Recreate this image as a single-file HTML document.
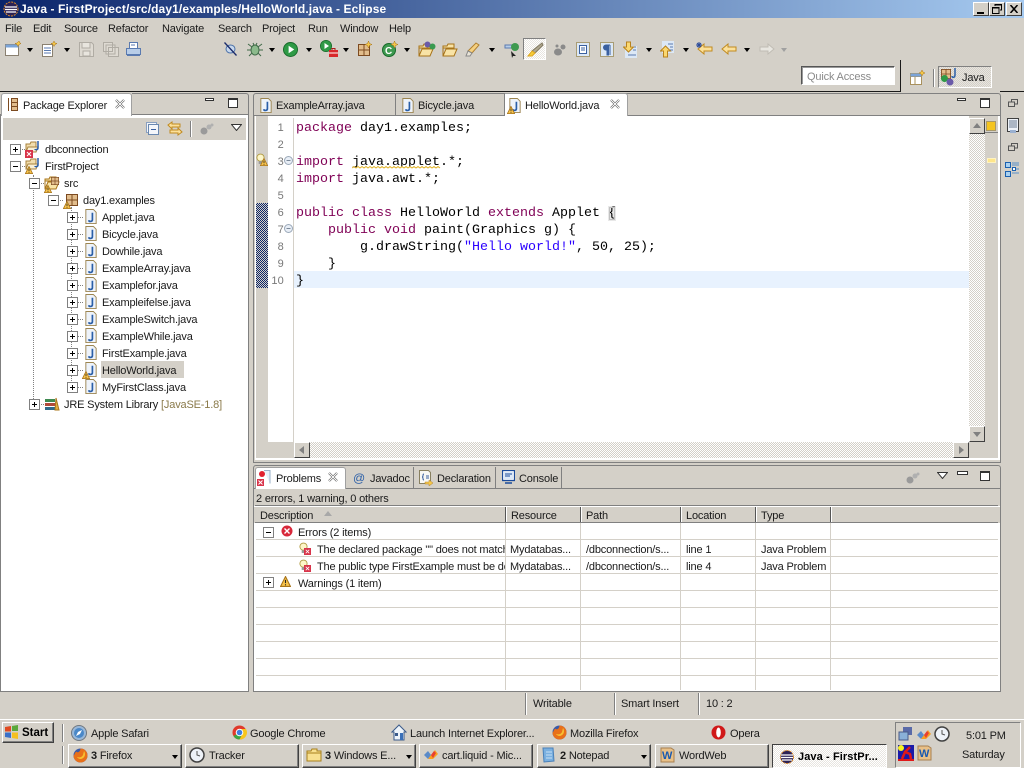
<!DOCTYPE html>
<html><head><meta charset="utf-8"><title>Java - Eclipse</title>
<style>
html,body{margin:0;padding:0;width:1024px;height:768px;overflow:hidden;background:#d4d0c8}
body{position:relative;font:11px/13px "Liberation Sans",sans-serif;color:#000}
.a,.t,svg.i{position:absolute}
.t{white-space:pre;letter-spacing:-.17px;color:#1a1a1a;margin-top:1px}
.c{position:absolute;white-space:pre;font:13.33px/17px "Liberation Mono",monospace;left:296px;color:#000;margin-top:1px}
.k{color:#7f0055;font-weight:normal}
.s{color:#2a00ff}
.n{position:absolute;left:268px;width:16px;text-align:right;font:11px/17px "Liberation Sans",sans-serif;color:#787878;letter-spacing:.2px;margin-top:1px}
.b{position:absolute;box-sizing:border-box;background:#d4d0c8;border:1px solid;border-color:#fff #404040 #404040 #fff}
.dv{position:absolute;width:1px;background:#d4d0c8}
.dh{position:absolute;height:1px;background:#d4d0c8}
.tb{position:absolute;box-sizing:border-box;height:24px;top:744px;background:#d4d0c8;border:1px solid;border-color:#fff #404040 #404040 #fff;box-shadow:inset -1px -1px 0 #808080}
.ar{position:absolute;width:0;height:0;border:3.5px solid transparent;border-top:4px solid #000;border-bottom:0}
.dot{position:absolute;border-left:1px dotted #808080}
.doh{position:absolute;border-top:1px dotted #808080}
.box{position:absolute;width:9px;height:9px;box-sizing:content-box;border:1px solid #808080;background:#fff}
.box:before{content:"";position:absolute;left:2px;top:4px;width:5px;height:1px;background:#000}
.box.p:after{content:"";position:absolute;left:4px;top:2px;width:1px;height:5px;background:#000}
</style></head><body>
<svg width="0" height="0" style="position:absolute"><defs>
<symbol id="j" viewBox="0 0 12 16"><path d="M.5.5h8l3 3v12H.5z" fill="#eef3fa" stroke="#9c8550"/><path d="M7.500 4v7.500c0 2-3.500 2.500-4 .5" fill="none" stroke="#2b5fa8" stroke-width="1.800"/></symbol>
<symbol id="w" viewBox="0 0 10 10"><path d="M5 .5l4.500 9H.5z" fill="#f7c24a" stroke="#a8741a"/><path d="M5 3.500v3M5 7.500v1" stroke="#222"/></symbol>
<symbol id="x" viewBox="0 0 8 8"><rect width="8" height="8" fill="#d8344a"/><path d="M2 2l4 4M6 2l-4 4" stroke="#fff"/></symbol>
<symbol id="prj" viewBox="0 0 16 16"><path d="M1 4h4l1-2h5v10H1z" fill="#f2deae" stroke="#a8823c"/><path d="M3 7h10l-2 5H1z" fill="#f9efd4" stroke="#a8823c"/><path d="M13 1v7c0 2-3 2-3 1" fill="none" stroke="#2b5fa8" stroke-width="1.500"/></symbol>
<symbol id="pkg" viewBox="0 0 12 12"><rect x=".5" y=".5" width="11" height="11" fill="#e2bd8c" stroke="#7c4a20"/><path d="M6 0v12M0 6h12" stroke="#7c4a20"/></symbol>
<symbol id="fold" viewBox="0 0 16 14"><path d="M1 3h4l1-2h6v4H1zM1 4v9h11l3-7H4l-3 7" fill="#f8e3a6" stroke="#a8741a"/></symbol>
<symbol id="bulb" viewBox="0 0 10 13"><circle cx="5" cy="5" r="4" fill="#fdf6c8" stroke="#b09a40"/><rect x="3" y="9" width="4" height="3" fill="#999"/></symbol>
<symbol id="play" viewBox="0 0 16 16"><circle cx="8" cy="8" r="7.500" fill="#2f9a46" stroke="#176a2a"/><path d="M6 4l6 4-6 4z" fill="#fff"/></symbol>
<symbol id="arrL" viewBox="0 0 16 12"><path d="M1 6l6-5v3h8v4H7v3z" fill="#fbe09a" stroke="#c08a20"/></symbol>
<symbol id="view" viewBox="0 0 10 8"><rect x="3.500" y=".5" width="6" height="4.500" fill="#d4d0c8" stroke="#555"/><rect x=".5" y="3" width="6" height="4.500" fill="#d4d0c8" stroke="#555"/></symbol>
</defs></svg>

<!-- title bar -->
<div class="a" style="left:0;top:0;width:1024px;height:18px;background:linear-gradient(90deg,#0a246a,#a6caf0)"></div>
<svg class="i" style="left:3px;top:1px" width="16" height="16" viewBox="0 0 16 16"><circle cx="8" cy="8" r="7" fill="#2c2255" stroke="#d98a2c" stroke-dasharray="2 1"/><path d="M2 6h12M2 8.500h12M3 11h10" stroke="#fff" stroke-width="1.300"/></svg>
<div class="t" style="left:20px;top:2px;color:#fff;font-weight:bold;font-size:12px;letter-spacing:.1px">Java - FirstProject/src/day1/examples/HelloWorld.java - Eclipse</div>
<div class="b" style="left:973px;top:2px;width:16px;height:14px"><div class="a" style="left:3px;top:9px;width:7px;height:2px;background:#000"></div></div>
<div class="b" style="left:989px;top:2px;width:16px;height:14px"><svg class="i" style="left:2px;top:1px" width="10" height="10" viewBox="0 0 10 10"><path d="M3 2V.5h6.500V6H8M.5 3.500h6.500V9.500H.5z" fill="none" stroke="#000"/><path d="M3 1h6.500M.5 4h6.500" stroke="#000"/></svg></div>
<div class="b" style="left:1006px;top:2px;width:16px;height:14px"><svg class="i" style="left:3px;top:2px" width="9" height="8" viewBox="0 0 9 8"><path d="M.5 0l7 8M7.500 0l-7 8" stroke="#000" stroke-width="1.500"/></svg></div>

<!-- menu -->
<div class="t" style="left:5px;top:22px">File</div>
<div class="t" style="left:33px;top:22px">Edit</div>
<div class="t" style="left:64px;top:22px">Source</div>
<div class="t" style="left:108px;top:22px">Refactor</div>
<div class="t" style="left:162px;top:22px">Navigate</div>
<div class="t" style="left:218px;top:22px">Search</div>
<div class="t" style="left:262px;top:22px">Project</div>
<div class="t" style="left:308px;top:22px">Run</div>
<div class="t" style="left:340px;top:22px">Window</div>
<div class="t" style="left:389px;top:22px">Help</div>

<!-- toolbar -->
<svg class="i" style="left:5px;top:41px" width="16" height="16" viewBox="0 0 16 16"><rect x=".5" y="3.500" width="13" height="11" fill="#fff" stroke="#8a8070"/><rect x=".5" y="3.500" width="13" height="3" fill="#7ba4d8"/><path d="M14 0l1 2 1 .5-2 1-1 2-1-2-2-1 2-.5z" fill="#f5c84a" stroke="#a8741a" stroke-width=".5"/></svg>
<div class="ar" style="left:27px;top:48px"></div>
<svg class="i" style="left:42px;top:41px" width="15" height="16" viewBox="0 0 15 16"><path d="M.5 3.500h10v12H.5z" fill="#fff" stroke="#8a8070"/><path d="M2 7h7M2 9.500h7M2 12h7" stroke="#5a7ab0"/><path d="M12 0l1 2 2 .5-2 1-1 2-1-2-2-1 2-.5z" fill="#f5c84a" stroke="#a8741a" stroke-width=".5"/></svg>
<div class="ar" style="left:64px;top:48px"></div>
<svg class="i" style="left:79px;top:42px" width="15" height="15" viewBox="0 0 15 15"><path d="M.5.5h12l2 2v12H.5z" fill="#dedad2" stroke="#b0aca4"/><path d="M3 1v5h8V1M4 9h7v5H4z" fill="#e8e5de" stroke="#b0aca4"/></svg>
<svg class="i" style="left:103px;top:42px" width="16" height="15" viewBox="0 0 16 15"><path d="M.5.5h9v9h-9zM3 3h9v9H3zM5.500 5.500h10v9h-10z" fill="#dedad2" stroke="#b0aca4"/></svg>
<svg class="i" style="left:126px;top:42px" width="15" height="15" viewBox="0 0 15 15"><path d="M3.500.5h8v6h-8z" fill="#fff" stroke="#5a7ab0"/><path d="M.5 6.500h14v6H.5z" fill="#b8cde8" stroke="#5a7ab0"/><path d="M1 13.500h13" stroke="#5a7ab0"/><path d="M5 3h4" stroke="#5a7ab0"/></svg>
<svg class="i" style="left:224px;top:42px" width="13" height="14" viewBox="0 0 13 14"><ellipse cx="6.500" cy="7" rx="4.500" ry="4" fill="#c8d8ec" stroke="#4a70a8"/><path d="M.5.5l12 13" stroke="#1a2a6a" stroke-width="1.300"/></svg>
<svg class="i" style="left:247px;top:41px" width="16" height="16" viewBox="0 0 16 16"><ellipse cx="8" cy="9" rx="4" ry="5" fill="#8cba8c" stroke="#406a48"/><path d="M1 3l4 3M15 3l-4 3M0 9h4M16 9h-4M2 15l3-3M14 15l-3-3M6 2l1 2M10 2L9 4" stroke="#406a48"/></svg>
<div class="ar" style="left:269px;top:48px"></div>
<svg class="i" style="left:283px;top:42px" width="15" height="15"><use href="#play"/></svg>
<div class="ar" style="left:306px;top:48px"></div>
<svg class="i" style="left:320px;top:40px" width="12" height="12"><use href="#play"/></svg>
<svg class="i" style="left:329px;top:48px" width="9" height="9" viewBox="0 0 9 9"><path d="M3 2V.5h3V2" fill="none" stroke="#b01a1a"/><rect y="2" width="9" height="7" fill="#d8282a"/><path d="M0 5h9" stroke="#fff"/></svg>
<div class="ar" style="left:343px;top:48px"></div>
<svg class="i" style="left:358px;top:44px" width="12" height="12"><use href="#pkg"/></svg>
<svg class="i" style="left:365px;top:41px" width="7" height="7" viewBox="0 0 7 7"><path d="M3.500 0l1 2.500L7 3.500l-2.500 1-1 2.500-1-2.500L0 3.500l2.500-1z" fill="#f5c84a" stroke="#a8741a" stroke-width=".5"/></svg>
<svg class="i" style="left:382px;top:43px" width="14" height="14" viewBox="0 0 14 14"><circle cx="7" cy="7" r="6.500" fill="#3f9a50" stroke="#176a2a"/><text x="3" y="11" font-family="Liberation Sans" font-size="10" font-weight="bold" fill="#fff">C</text></svg>
<svg class="i" style="left:391px;top:41px" width="7" height="7" viewBox="0 0 7 7"><path d="M3.500 0l1 2.500L7 3.500l-2.500 1-1 2.500-1-2.500L0 3.500l2.500-1z" fill="#f5c84a" stroke="#a8741a" stroke-width=".5"/></svg>
<div class="ar" style="left:404px;top:48px"></div>
<svg class="i" style="left:418px;top:43px" width="16" height="14"><use href="#fold"/></svg>
<svg class="i" style="left:424px;top:41px" width="12" height="9" viewBox="0 0 12 9"><circle cx="3.500" cy="3.500" r="3" fill="#6a5aa8"/><circle cx="8.500" cy="5.500" r="3" fill="#3a9a50"/></svg>
<svg class="i" style="left:442px;top:43px" width="16" height="14"><use href="#fold"/></svg>
<svg class="i" style="left:465px;top:42px" width="16" height="15" viewBox="0 0 16 15"><path d="M11 1l3 2-7 8-4-2z" fill="#f5d080" stroke="#b08030"/><path d="M3 9l4 2-2 3H1z" fill="#e8e4d8" stroke="#888"/></svg>
<div class="ar" style="left:489px;top:48px"></div>
<svg class="i" style="left:504px;top:42px" width="16" height="16" viewBox="0 0 16 16"><path d="M1 3h7v3H1z" fill="#b8cde8" stroke="#5a7ab0"/><path d="M7 9l5 5-3 0-1 2z" fill="#222"/><circle cx="11" cy="5" r="4" fill="#3f9a50"/></svg>
<div class="a" style="left:523px;top:38px;width:23px;height:22px;box-sizing:border-box;border:1px solid;border-color:#808080 #fff #fff #808080;background:repeating-conic-gradient(#e8e5e0 0 25%,#fff 0 50%) 0 0/2px 2px"></div>
<svg class="i" style="left:527px;top:42px" width="17" height="16" viewBox="0 0 17 16"><path d="M15 1l1 2-8 8-3-2z" fill="#b0a890" stroke="#807860"/><path d="M5 9l3 2-3 3H1z" fill="#f5cc3a" stroke="#e0a820"/></svg>
<svg class="i" style="left:553px;top:44px" width="13" height="12" viewBox="0 0 13 12"><ellipse cx="5" cy="8" rx="4" ry="3.500" fill="#8a8a8a"/><circle cx="10" cy="3" r="2.500" fill="#8a8a8a"/><circle cx="4" cy="2" r="1.500" fill="#8a8a8a"/></svg>
<svg class="i" style="left:576px;top:42px" width="14" height="15" viewBox="0 0 14 15"><rect x=".5" y=".5" width="13" height="14" fill="#dce8f6" stroke="#a89c74"/><rect x="3.500" y="3.500" width="7" height="8" fill="#fff" stroke="#3a60a0"/><path d="M5 6h4M5 8h4" stroke="#3a60a0"/></svg>
<svg class="i" style="left:600px;top:42px" width="14" height="15" viewBox="0 0 14 15"><rect x=".5" y=".5" width="13" height="14" fill="#dce8f6" stroke="#a89c74"/><path d="M10 3H6a2.500 2.500 0 000 5h1V13h1.500V3M10 3v10" fill="#3a60a0" stroke="#3a60a0"/></svg>
<svg class="i" style="left:623px;top:41px" width="15" height="17" viewBox="0 0 15 17"><path d="M2 5h12v12H2z" fill="#dce8f6"/><path d="M10 6h3M10 9h3M5 14h8" stroke="#5a7ab0"/><path d="M3.500 1h4v5h3l-5 5-5-5h3z" fill="#fbd870" stroke="#b8821c"/></svg>
<div class="ar" style="left:646px;top:48px"></div>
<svg class="i" style="left:660px;top:41px" width="15" height="17" viewBox="0 0 15 17"><path d="M2 0h12v12H2z" fill="#dce8f6"/><path d="M8 3h5M10 6h3M10 9h3" stroke="#5a7ab0"/><path d="M5.500 5l5 5h-3v6h-4v-6h-3z" fill="#fbd870" stroke="#b8821c"/></svg>
<div class="ar" style="left:683px;top:48px"></div>
<svg class="i" style="left:697px;top:43px" width="16" height="12"><use href="#arrL"/></svg>
<svg class="i" style="left:696px;top:42px" width="6" height="6" viewBox="0 0 6 6"><path d="M3 0v6M0 3h6M1 1l4 4M5 1L1 5" stroke="#2a4a9a"/></svg>
<svg class="i" style="left:721px;top:43px" width="16" height="12"><use href="#arrL"/></svg>
<div class="ar" style="left:744px;top:48px"></div>
<svg class="i" style="left:759px;top:43px" width="16" height="12" viewBox="0 0 16 12"><path d="M15 6L9 1v3H1v4h8v3z" fill="#e8e6e0" stroke="#c0bcb4"/></svg>
<div class="ar" style="left:781px;top:48px;border-top-color:#a0a0a0"></div>

<!-- quick access -->
<div class="a" style="left:801px;top:66px;width:94px;height:19px;box-sizing:border-box;background:#fff;border:1px solid;border-color:#555 #fff #fff #555;box-shadow:inset 1px 1px 0 #999"></div>
<div class="t" style="left:807px;top:70px;color:#8a8a8a">Quick Access</div>
<div class="a" style="left:0;top:91px;width:900px;height:1px;background:#1a1a1a"></div>
<div class="a" style="left:900px;top:60px;width:1px;height:32px;background:#1a1a1a"></div>
<div class="a" style="left:1000px;top:91px;width:24px;height:1px;background:#1a1a1a"></div>
<svg class="i" style="left:910px;top:70px" width="15" height="15" viewBox="0 0 15 15"><path d="M.5 3.500h11v11H.5z" fill="#fff" stroke="#a8905c"/><path d="M.5 6.500h11M5 6.500v8" stroke="#a8905c"/><path d="M.5 3.500h11v3H.5z" fill="#7ba4d8"/><path d="M12 0l1 2 2 1-2 1-1 2-1-2-2-1 2-1z" fill="#f5c84a" stroke="#a8741a" stroke-width=".5"/></svg>
<div class="a" style="left:933px;top:69px;width:1px;height:18px;background:#808080;box-shadow:1px 0 0 #fff"></div>
<div class="a" style="left:938px;top:66px;width:54px;height:22px;box-sizing:border-box;border:1px solid;border-color:#808080 #fff #fff #808080;background:repeating-conic-gradient(#e8e5e0 0 25%,#d4d0c8 0 50%) 0 0/2px 2px"></div>
<svg class="i" style="left:941px;top:69px" width="10" height="10"><use href="#pkg"/></svg>
<svg class="i" style="left:941px;top:74px" width="14" height="12" viewBox="0 0 14 12"><circle cx="3.500" cy="4.500" r="3.500" fill="#2f9a46"/><circle cx="9" cy="8" r="3.500" fill="#6a5aa8"/></svg>
<svg class="i" style="left:951px;top:68px" width="6" height="11" viewBox="0 0 6 11"><path d="M4 0v7c0 3-3 3-3 1" fill="none" stroke="#2b5fa8" stroke-width="1.500"/></svg>
<div class="t" style="left:962px;top:71px">Java</div>

<!-- package explorer panel -->
<div class="a" style="left:0;top:114px;width:249px;height:578px;box-sizing:border-box;border:1px solid #808080;background:#fff"></div>
<div class="a" style="left:1px;top:93px;width:131px;height:23px;box-sizing:border-box;background:#fff;border:1px solid #a0a0a0;border-bottom:0;border-radius:3px 3px 0 0"></div>
<div class="a" style="left:132px;top:93px;width:117px;height:21px;box-sizing:border-box;border-top:1px solid #808080;border-right:1px solid #808080;border-radius:0 3px 0 0"></div>
<svg class="i" style="left:8px;top:98px" width="10" height="13" viewBox="0 0 10 13"><path d="M.5 0v13" stroke="#7c4a20"/><rect x="3.500" y=".5" width="6" height="4" fill="#e2bd8c" stroke="#7c4a20"/><rect x="3.500" y="4.500" width="6" height="4" fill="#e2bd8c" stroke="#7c4a20"/><rect x="3.500" y="8.500" width="6" height="4" fill="#e2bd8c" stroke="#7c4a20"/></svg>
<div class="t" style="left:23px;top:99px">Package Explorer</div>
<svg class="i" style="left:115px;top:99px" width="10" height="10" viewBox="0 0 10 10"><path d="M1 1l8 8M9 1L1 9" stroke="#555" stroke-width="2.200"/><path d="M1 1l8 8M9 1L1 9" stroke="#fff" stroke-width="1"/></svg>
<div class="a" style="left:205px;top:98px;width:9px;height:3px;box-sizing:border-box;border:1px solid #333;background:#fff"></div>
<div class="a" style="left:228px;top:98px;width:10px;height:10px;box-sizing:border-box;border:1px solid #333;border-top-width:2px;background:#fff"></div>
<div class="a" style="left:3px;top:118px;width:243px;height:22px;background:#d4d0c8"></div>
<svg class="i" style="left:146px;top:122px" width="13" height="13" viewBox="0 0 13 13"><rect x=".5" y=".5" width="10" height="10" fill="#f4f6fa" stroke="#8aa0c0"/><rect x="2.500" y="2.500" width="10" height="10" fill="#f4f6fa" stroke="#6a88b0"/><path d="M5 7.500h5" stroke="#3a60a0"/></svg>
<svg class="i" style="left:167px;top:121px" width="16" height="15" viewBox="0 0 16 15"><path d="M1 4l4-3v2h8v3H5v2z" fill="#fbe09a" stroke="#c08a20"/><path d="M15 11l-4 3v-2H3V9h8V7z" fill="#fbe09a" stroke="#c08a20"/></svg>
<div class="a" style="left:190px;top:121px;width:1px;height:16px;background:#808080;box-shadow:1px 0 0 #fff"></div>
<svg class="i" style="left:199px;top:123px" width="16" height="12" viewBox="0 0 16 12"><circle cx="5" cy="8" r="3.500" fill="#9a9a9a"/><circle cx="10" cy="4" r="2.500" fill="#b0b0b0"/><circle cx="13" cy="2" r="1.500" fill="#b0b0b0"/></svg>
<svg class="i" style="left:231px;top:124px" width="11" height="7" viewBox="0 0 11 7"><path d="M.5.5h10L5.500 6.500z" fill="#fff" stroke="#333"/></svg>

<!-- tree lines -->
<div class="dot" style="left:33px;top:175px;height:228px"></div>
<div class="dot" style="left:71px;top:207px;height:180px"></div>
<div class="doh" style="left:20px;top:149px;width:5px"></div>
<div class="doh" style="left:20px;top:166px;width:5px"></div>
<div class="doh" style="left:39px;top:183px;width:5px"></div>
<div class="doh" style="left:58px;top:200px;width:5px"></div>
<div class="doh" style="left:39px;top:404px;width:5px"></div>
<div class="doh" style="left:77px;top:217px;width:6px"></div>
<div class="doh" style="left:77px;top:234px;width:6px"></div>
<div class="doh" style="left:77px;top:251px;width:6px"></div>
<div class="doh" style="left:77px;top:268px;width:6px"></div>
<div class="doh" style="left:77px;top:285px;width:6px"></div>
<div class="doh" style="left:77px;top:302px;width:6px"></div>
<div class="doh" style="left:77px;top:319px;width:6px"></div>
<div class="doh" style="left:77px;top:336px;width:6px"></div>
<div class="doh" style="left:77px;top:353px;width:6px"></div>
<div class="doh" style="left:77px;top:370px;width:6px"></div>
<div class="doh" style="left:77px;top:387px;width:6px"></div>

<div class="box p" style="left:10px;top:144px"></div>
<div class="box" style="left:10px;top:161px"></div>
<div class="box" style="left:29px;top:178px"></div>
<div class="box" style="left:48px;top:195px"></div>
<div class="box p" style="left:67px;top:212px"></div>
<div class="box p" style="left:67px;top:229px"></div>
<div class="box p" style="left:67px;top:246px"></div>
<div class="box p" style="left:67px;top:263px"></div>
<div class="box p" style="left:67px;top:280px"></div>
<div class="box p" style="left:67px;top:297px"></div>
<div class="box p" style="left:67px;top:314px"></div>
<div class="box p" style="left:67px;top:331px"></div>
<div class="box p" style="left:67px;top:348px"></div>
<div class="box p" style="left:67px;top:365px"></div>
<div class="box p" style="left:67px;top:382px"></div>
<div class="box p" style="left:29px;top:399px"></div>

<svg class="i" style="left:25px;top:140px" width="16" height="16"><use href="#prj"/></svg>
<svg class="i" style="left:25px;top:150px" width="8" height="8"><use href="#x"/></svg>
<svg class="i" style="left:25px;top:157px" width="16" height="16"><use href="#prj"/></svg>
<svg class="i" style="left:25px;top:166px" width="8" height="8"><use href="#w"/></svg>
<svg class="i" style="left:44px;top:176px" width="16" height="14"><use href="#fold"/></svg>
<svg class="i" style="left:51px;top:177px" width="8" height="8"><use href="#pkg"/></svg>
<svg class="i" style="left:44px;top:185px" width="8" height="8"><use href="#w"/></svg>
<svg class="i" style="left:66px;top:194px" width="12" height="12"><use href="#pkg"/></svg>
<svg class="i" style="left:63px;top:201px" width="8" height="8"><use href="#w"/></svg>
<svg class="i" style="left:85px;top:209px" width="12" height="15"><use href="#j"/></svg>
<svg class="i" style="left:85px;top:226px" width="12" height="15"><use href="#j"/></svg>
<svg class="i" style="left:85px;top:243px" width="12" height="15"><use href="#j"/></svg>
<svg class="i" style="left:85px;top:260px" width="12" height="15"><use href="#j"/></svg>
<svg class="i" style="left:85px;top:277px" width="12" height="15"><use href="#j"/></svg>
<svg class="i" style="left:85px;top:294px" width="12" height="15"><use href="#j"/></svg>
<svg class="i" style="left:85px;top:311px" width="12" height="15"><use href="#j"/></svg>
<svg class="i" style="left:85px;top:328px" width="12" height="15"><use href="#j"/></svg>
<svg class="i" style="left:85px;top:345px" width="12" height="15"><use href="#j"/></svg>
<svg class="i" style="left:85px;top:362px" width="12" height="15"><use href="#j"/></svg>
<svg class="i" style="left:82px;top:371px" width="8" height="8"><use href="#w"/></svg>
<svg class="i" style="left:85px;top:379px" width="12" height="15"><use href="#j"/></svg>
<svg class="i" style="left:45px;top:397px" width="15" height="14" viewBox="0 0 15 14"><rect x="0" y="2" width="10" height="3" fill="#3f8a50"/><rect x="0" y="6" width="10" height="3" fill="#b04a3a"/><rect x="0" y="10" width="10" height="3" fill="#2f6a8a"/><path d="M11 1l3 12h-4z" fill="#e0b040" stroke="#a8741a"/></svg>

<div class="t" style="left:45px;top:143px">dbconnection</div>
<div class="t" style="left:45px;top:160px">FirstProject</div>
<div class="t" style="left:64px;top:177px">src</div>
<div class="t" style="left:83px;top:194px">day1.examples</div>
<div class="t" style="left:102px;top:211px">Applet.java</div>
<div class="t" style="left:102px;top:228px">Bicycle.java</div>
<div class="t" style="left:102px;top:245px">Dowhile.java</div>
<div class="t" style="left:102px;top:262px">ExampleArray.java</div>
<div class="t" style="left:102px;top:279px">Examplefor.java</div>
<div class="t" style="left:102px;top:296px">Exampleifelse.java</div>
<div class="t" style="left:102px;top:313px">ExampleSwitch.java</div>
<div class="t" style="left:102px;top:330px">ExampleWhile.java</div>
<div class="t" style="left:102px;top:347px">FirstExample.java</div>
<div class="a" style="left:101px;top:361px;width:83px;height:17px;background:#d4d0c8"></div>
<div class="t" style="left:102px;top:364px">HelloWorld.java</div>
<div class="t" style="left:102px;top:381px">MyFirstClass.java</div>
<div class="t" style="left:64px;top:398px">JRE System Library <span style="color:#8a7a4a">[JavaSE-1.8]</span></div>

<!-- editor panel -->
<div class="a" style="left:253px;top:114px;width:748px;height:349px;box-sizing:border-box;border:1px solid #808080;border-top:0;background:#d4d0c8"></div>
<div class="a" style="left:255px;top:116px;width:1px;height:343px;background:#fff"></div>
<div class="a" style="left:255px;top:458px;width:744px;height:2px;background:#fff"></div>
<div class="a" style="left:998px;top:116px;width:2px;height:344px;background:#fff"></div>
<div class="a" style="left:253px;top:93px;width:748px;height:23px;box-sizing:border-box;border:1px solid #808080;border-radius:3px 3px 0 0"></div>
<div class="a" style="left:395px;top:94px;width:1px;height:21px;background:#808080"></div>
<div class="a" style="left:504px;top:94px;width:1px;height:21px;background:#808080"></div>
<div class="a" style="left:505px;top:93px;width:123px;height:23px;box-sizing:border-box;background:#fff;border:1px solid #a0a0a0;border-left:0;border-bottom:0;border-radius:0 3px 0 0"></div>
<svg class="i" style="left:260px;top:98px" width="12" height="15"><use href="#j"/></svg>
<div class="t" style="left:276px;top:99px">ExampleArray.java</div>
<svg class="i" style="left:402px;top:98px" width="12" height="15"><use href="#j"/></svg>
<div class="t" style="left:418px;top:99px">Bicycle.java</div>
<svg class="i" style="left:509px;top:98px" width="12" height="15"><use href="#j"/></svg>
<svg class="i" style="left:507px;top:106px" width="8" height="8"><use href="#w"/></svg>
<div class="t" style="left:525px;top:99px">HelloWorld.java</div>
<svg class="i" style="left:610px;top:99px" width="10" height="10" viewBox="0 0 10 10"><path d="M1 1l8 8M9 1L1 9" stroke="#555" stroke-width="2.200"/><path d="M1 1l8 8M9 1L1 9" stroke="#fff" stroke-width="1"/></svg>
<div class="a" style="left:957px;top:98px;width:9px;height:3px;box-sizing:border-box;border:1px solid #333;background:#fff"></div>
<div class="a" style="left:980px;top:98px;width:10px;height:10px;box-sizing:border-box;border:1px solid #333;border-top-width:2px;background:#fff"></div>

<!-- editor body -->
<div class="a" style="left:268px;top:116px;width:701px;height:326px;background:#fff"></div>
<div class="a" style="left:293px;top:118px;width:1px;height:324px;background:#d4d0c8"></div>
<div class="a" style="left:294px;top:271px;width:675px;height:17px;background:#e8f2fe"></div>
<div class="a" style="left:256px;top:203px;width:12px;height:85px;background:repeating-conic-gradient(#0a246a 0 25%,#d4d0c8 0 50%) 0 0/2px 2px"></div>
<svg class="i" style="left:256px;top:153px" width="9" height="12"><use href="#bulb"/></svg>
<svg class="i" style="left:260px;top:158px" width="8" height="8"><use href="#w"/></svg>

<div class="n" style="top:119px">1</div>
<div class="n" style="top:136px">2</div>
<div class="n" style="top:153px">3</div>
<div class="n" style="top:170px">4</div>
<div class="n" style="top:187px">5</div>
<div class="n" style="top:204px">6</div>
<div class="n" style="top:221px">7</div>
<div class="n" style="top:238px">8</div>
<div class="n" style="top:255px">9</div>
<div class="n" style="top:272px">10</div>
<svg class="i" style="left:284px;top:156px" width="9" height="9" viewBox="0 0 9 9"><circle cx="4.500" cy="4.500" r="4" fill="#e8eef6" stroke="#9aa8b8"/><path d="M2.500 4.500h4" stroke="#7a8898"/></svg>
<svg class="i" style="left:284px;top:224px" width="9" height="9" viewBox="0 0 9 9"><circle cx="4.500" cy="4.500" r="4" fill="#e8eef6" stroke="#9aa8b8"/><path d="M2.500 4.500h4" stroke="#7a8898"/></svg>

<div class="c" style="top:119px"><span class="k">package</span> day1.examples;</div>
<div class="c" style="top:153px"><span class="k">import</span> java.applet.*;</div>
<svg class="i" style="left:352px;top:166px" width="92" height="3" viewBox="0 0 92 3"><path d="M0 2l2-1.500 2 1.500 2-1.500 2 1.500 2-1.500 2 1.500 2-1.500 2 1.500 2-1.500 2 1.500 2-1.500 2 1.500 2-1.500 2 1.500 2-1.500 2 1.500 2-1.500 2 1.500 2-1.500 2 1.500 2-1.500 2 1.500 2-1.500 2 1.500 2-1.500 2 1.500 2-1.500 2 1.500 2-1.500 2 1.500 2-1.500 2 1.500 2-1.500 2 1.500 2-1.500 2 1.500 2-1.500 2 1.500 2-1.500 2 1.500 2-1.500 2 1.500 2-1.500 2 1.500" fill="none" stroke="#e0b020" stroke-width=".9"/></svg>
<div class="c" style="top:170px"><span class="k">import</span> java.awt.*;</div>
<div class="c" style="top:204px"><span class="k">public</span> <span class="k">class</span> HelloWorld <span class="k">extends</span> Applet <span style="background:#e8e8e8;outline:1px solid #c0c0c0;outline-offset:-2px">{</span></div>
<div class="c" style="top:221px">    <span class="k">public</span> <span class="k">void</span> paint(Graphics g) {</div>
<div class="c" style="top:238px">        g.drawString(<span class="s">"Hello world!"</span>, 50, 25);</div>
<div class="c" style="top:255px">    }</div>
<div class="c" style="top:272px">}</div>

<!-- scrollbars -->
<div class="a" style="left:294px;top:442px;width:675px;height:16px;background:repeating-conic-gradient(#d4d0c8 0 25%,#fff 0 50%) 0 0/2px 2px"></div>
<div class="a" style="left:969px;top:118px;width:16px;height:324px;background:repeating-conic-gradient(#d4d0c8 0 25%,#fff 0 50%) 0 0/2px 2px"></div>
<div class="a" style="left:985px;top:118px;width:13px;height:340px;background:#d4d0c8"></div>
<div class="a" style="left:985px;top:132px;width:13px;height:1px;background:#808080"></div>
<div class="a" style="left:986px;top:121px;width:10px;height:10px;box-sizing:border-box;background:#f4c420;border:1px solid #a89868"></div>
<div class="a" style="left:987px;top:158px;width:9px;height:5px;background:#ffe68a;outline:1px solid #fff3c0;outline-offset:-1px"></div>
<div class="b" style="left:969px;top:118px;width:16px;height:16px"><div class="a" style="left:3px;top:4px;width:0;height:0;border:4px solid transparent;border-bottom:5px solid #808080;border-top:0"></div></div>
<div class="b" style="left:969px;top:426px;width:16px;height:16px"><div class="a" style="left:3px;top:5px;width:0;height:0;border:4px solid transparent;border-top:5px solid #808080;border-bottom:0"></div></div>
<div class="b" style="left:294px;top:442px;width:16px;height:16px"><div class="a" style="left:4px;top:3px;width:0;height:0;border:4px solid transparent;border-right:5px solid #808080;border-left:0"></div></div>
<div class="b" style="left:953px;top:442px;width:16px;height:16px"><div class="a" style="left:5px;top:3px;width:0;height:0;border:4px solid transparent;border-left:5px solid #808080;border-right:0"></div></div>

<!-- right trim -->
<svg class="i" style="left:1008px;top:99px" width="10" height="8"><use href="#view"/></svg>
<svg class="i" style="left:1007px;top:118px" width="12" height="15" viewBox="0 0 12 15"><rect x=".5" y=".5" width="11" height="13" fill="#eef2f8" stroke="#404040"/><path d="M2 3h8M2 5h8M2 7h8M2 9h8" stroke="#6a7a90"/><path d="M3 12h6v3H3z" fill="#9ab0d0"/></svg>
<svg class="i" style="left:1008px;top:143px" width="10" height="8"><use href="#view"/></svg>
<svg class="i" style="left:1005px;top:162px" width="14" height="16" viewBox="0 0 14 16"><rect x=".5" y=".5" width="5" height="5" fill="#a8d0f0" stroke="#1a60b0"/><rect x=".5" y="9.500" width="5" height="5" fill="#a8d0f0" stroke="#1a60b0"/><rect x="7.500" y="5.500" width="3" height="3" fill="#fff" stroke="#1a60b0"/><path d="M7 1h7M7 3h7M11 7h3M7 11h7" stroke="#5a90c8"/></svg>

<!-- problems panel -->
<div class="a" style="left:253px;top:465px;width:748px;height:227px;box-sizing:border-box;border:1px solid #808080;border-radius:3px 3px 0 0;background:#d4d0c8"></div>
<div class="a" style="left:254px;top:488px;width:746px;height:1px;background:#808080"></div>
<div class="a" style="left:255px;top:467px;width:91px;height:22px;box-sizing:border-box;background:#fff;border:1px solid #a0a0a0;border-bottom:0;border-radius:3px 3px 0 0"></div>
<div class="a" style="left:413px;top:467px;width:1px;height:21px;background:#808080"></div>
<div class="a" style="left:495px;top:467px;width:1px;height:21px;background:#808080"></div>
<div class="a" style="left:561px;top:467px;width:1px;height:21px;background:#808080"></div>
<svg class="i" style="left:257px;top:470px" width="14" height="16" viewBox="0 0 14 16"><path d="M7 .5h6v13" fill="#e8f0fa" stroke="#9ab0c8"/><circle cx="5" cy="4" r="3" fill="#e02030"/><rect y="9" width="7" height="7" fill="#d8344a"/><path d="M1.500 10.500l4 4M5.500 10.500l-4 4" stroke="#fff"/></svg>
<div class="t" style="left:276px;top:472px">Problems</div>
<svg class="i" style="left:328px;top:472px" width="10" height="10" viewBox="0 0 10 10"><path d="M1 1l8 8M9 1L1 9" stroke="#555" stroke-width="2.200"/><path d="M1 1l8 8M9 1L1 9" stroke="#fff" stroke-width="1"/></svg>
<div class="t" style="left:353px;top:471px;color:#2b5fa8;font-size:12px">@</div>
<div class="t" style="left:370px;top:472px">Javadoc</div>
<svg class="i" style="left:419px;top:470px" width="14" height="16" viewBox="0 0 14 16"><path d="M.5.5h9l2 2v11H.5z" fill="#f8f8f4" stroke="#888060"/><path d="M5 4c-2 0 0 3-2 3 2 0 0 3 2 3M7 6h3M7 8h3" fill="none" stroke="#3a60a0"/><path d="M6 12h4v-2l4 3-4 3v-2H6z" fill="#f5c84a" stroke="#b08030" stroke-width=".5"/></svg>
<div class="t" style="left:437px;top:472px">Declaration</div>
<svg class="i" style="left:502px;top:470px" width="13" height="14" viewBox="0 0 13 14"><rect x=".5" y=".5" width="12" height="10" fill="#fff" stroke="#1a4a9a" stroke-width="1.300"/><rect x="2" y="2" width="9" height="7" fill="#dce8f8"/><path d="M3 4h7M3 6h5" stroke="#1a4a9a"/><path d="M3 13h7" stroke="#1a4a9a" stroke-width="1.500"/></svg>
<div class="t" style="left:519px;top:472px">Console</div>
<svg class="i" style="left:905px;top:472px" width="16" height="12" viewBox="0 0 16 12"><circle cx="5" cy="8" r="3.500" fill="#9a9a9a"/><circle cx="10" cy="4" r="2.500" fill="#b0b0b0"/><circle cx="13" cy="2" r="1.500" fill="#b0b0b0"/></svg>
<svg class="i" style="left:937px;top:472px" width="11" height="7" viewBox="0 0 11 7"><path d="M.5.5h10L5.500 6.500z" fill="#fff" stroke="#333"/></svg>
<div class="a" style="left:957px;top:471px;width:11px;height:4px;box-sizing:border-box;border:1px solid #333;background:#fff"></div>
<div class="a" style="left:980px;top:471px;width:10px;height:10px;box-sizing:border-box;border:1px solid #333;border-top-width:2px;background:#fff"></div>

<div class="t" style="left:256px;top:492px">2 errors, 1 warning, 0 others</div>
<div class="a" style="left:255px;top:505px;width:743px;height:1px;background:#808080"></div>
<div class="a" style="left:254px;top:506px;width:746px;height:1px;background:#fff"></div>
<div class="a" style="left:255px;top:507px;width:743px;height:15px;background:#d4d0c8;border-bottom:1px solid #808080"></div>
<div class="a" style="left:254px;top:523px;width:746px;height:168px;background:#fff"></div>
<div class="a" style="left:505px;top:507px;width:1px;height:15px;background:#555;box-shadow:1px 0 0 #fff"></div>
<div class="a" style="left:580px;top:507px;width:1px;height:15px;background:#555;box-shadow:1px 0 0 #fff"></div>
<div class="a" style="left:680px;top:507px;width:1px;height:15px;background:#555;box-shadow:1px 0 0 #fff"></div>
<div class="a" style="left:755px;top:507px;width:1px;height:15px;background:#555;box-shadow:1px 0 0 #fff"></div>
<div class="a" style="left:830px;top:507px;width:1px;height:15px;background:#555;box-shadow:1px 0 0 #fff"></div>
<div class="dv" style="left:505px;top:523px;height:167px"></div>
<div class="dv" style="left:580px;top:523px;height:167px"></div>
<div class="dv" style="left:680px;top:523px;height:167px"></div>
<div class="dv" style="left:755px;top:523px;height:167px"></div>
<div class="dv" style="left:830px;top:523px;height:167px"></div>
<div class="dh" style="left:256px;top:539px;width:742px"></div>
<div class="dh" style="left:256px;top:556px;width:742px"></div>
<div class="dh" style="left:256px;top:573px;width:742px"></div>
<div class="dh" style="left:256px;top:590px;width:742px"></div>
<div class="dh" style="left:256px;top:607px;width:742px"></div>
<div class="dh" style="left:256px;top:624px;width:742px"></div>
<div class="dh" style="left:256px;top:641px;width:742px"></div>
<div class="dh" style="left:256px;top:658px;width:742px"></div>
<div class="dh" style="left:256px;top:675px;width:742px"></div>

<div class="t" style="left:260px;top:509px">Description</div>
<svg class="i" style="left:324px;top:511px" width="8" height="5" viewBox="0 0 8 5"><path d="M4 0l4 5H0z" fill="#a8a8a8"/></svg>
<div class="t" style="left:511px;top:509px">Resource</div>
<div class="t" style="left:586px;top:509px">Path</div>
<div class="t" style="left:686px;top:509px">Location</div>
<div class="t" style="left:761px;top:509px">Type</div>

<div class="box" style="left:263px;top:527px"></div>
<svg class="i" style="left:281px;top:525px" width="12" height="12" viewBox="0 0 12 12"><circle cx="6" cy="6" r="5.500" fill="#d8283a"/><path d="M3.500 3.500l5 5M8.500 3.500l-5 5" stroke="#fff" stroke-width="1.400"/></svg>
<div class="t" style="left:298px;top:526px">Errors (2 items)</div>
<div class="a" style="left:298px;top:541px;width:207px;height:15px;overflow:hidden"><div class="t" style="left:19px;top:2px">The declared package "" does not match the expected package</div></div>
<svg class="i" style="left:299px;top:542px" width="9" height="12"><use href="#bulb"/></svg>
<svg class="i" style="left:304px;top:548px" width="7" height="7"><use href="#x"/></svg>
<div class="a" style="left:298px;top:558px;width:207px;height:15px;overflow:hidden"><div class="t" style="left:19px;top:2px">The public type FirstExample must be defined in its own file</div></div>
<svg class="i" style="left:299px;top:559px" width="9" height="12"><use href="#bulb"/></svg>
<svg class="i" style="left:304px;top:565px" width="7" height="7"><use href="#x"/></svg>
<div class="t" style="left:510px;top:543px">Mydatabas...</div>
<div class="t" style="left:586px;top:543px">/dbconnection/s...</div>
<div class="t" style="left:686px;top:543px">line 1</div>
<div class="t" style="left:761px;top:543px">Java Problem</div>
<div class="t" style="left:510px;top:560px">Mydatabas...</div>
<div class="t" style="left:586px;top:560px">/dbconnection/s...</div>
<div class="t" style="left:686px;top:560px">line 4</div>
<div class="t" style="left:761px;top:560px">Java Problem</div>
<div class="box p" style="left:263px;top:577px"></div>
<svg class="i" style="left:280px;top:576px" width="11" height="11"><use href="#w"/></svg>
<div class="t" style="left:298px;top:577px">Warnings (1 item)</div>

<!-- status bar -->
<div class="a" style="left:525px;top:693px;width:1px;height:22px;background:#808080;box-shadow:1px 0 0 #fff"></div>
<div class="a" style="left:614px;top:693px;width:1px;height:22px;background:#808080;box-shadow:1px 0 0 #fff"></div>
<div class="a" style="left:698px;top:693px;width:1px;height:22px;background:#808080;box-shadow:1px 0 0 #fff"></div>
<div class="t" style="left:533px;top:697px">Writable</div>
<div class="t" style="left:621px;top:697px">Smart Insert</div>
<div class="t" style="left:706px;top:697px">10 : 2</div>

<!-- taskbar -->
<div class="a" style="left:0;top:719px;width:1024px;height:1px;background:#fff"></div>
<div class="b" style="left:2px;top:722px;width:52px;height:21px;box-shadow:inset -1px -1px 0 #808080"></div>
<svg class="i" style="left:4px;top:725px" width="15" height="14" viewBox="0 0 15 14"><path d="M1 2l6-1v5.500H1z" fill="#e04a20"/><path d="M8 1l6-1v6H8z" fill="#5aa83a"/><path d="M1 7.500h6V13l-6-1z" fill="#3a70c8"/><path d="M8 7.500h6V14l-6-1z" fill="#f5c020"/></svg>
<div class="t" style="left:22px;top:726px;font-weight:bold;font-size:11.5px;color:#000;letter-spacing:0">Start</div>
<div class="a" style="left:62px;top:724px;width:1px;height:18px;background:#808080;box-shadow:1px 0 0 #fff"></div>
<div class="a" style="left:62px;top:746px;width:1px;height:18px;background:#808080;box-shadow:1px 0 0 #fff"></div>

<svg class="i" style="left:71px;top:725px" width="16" height="16" viewBox="0 0 16 16"><circle cx="8" cy="8" r="7.500" fill="#9ab8d8" stroke="#707880"/><circle cx="8" cy="8" r="5" fill="#4a88c8"/><path d="M11 5L7 7 5 11l4-2z" fill="#fff"/></svg>
<div class="t" style="left:91px;top:727px">Apple Safari</div>
<svg class="i" style="left:232px;top:725px" width="15" height="15" viewBox="0 0 15 15"><circle cx="7.500" cy="7.500" r="7" fill="#e0392b"/><path d="M7.500 7.500L1.500 11A7 7 0 007.500 14.500L11 8z" fill="#3aa845"/><path d="M7.500 4H14a7 7 0 01-6.500 10.500L11 8z" fill="#f8c51c"/><circle cx="7.500" cy="7.500" r="3.300" fill="#3f7ee0" stroke="#fff"/></svg>
<div class="t" style="left:250px;top:727px">Google Chrome</div>
<svg class="i" style="left:391px;top:724px" width="16" height="17" viewBox="0 0 16 17"><path d="M8 1L1 8h2v8h10V8h2z" fill="#eef4fa" stroke="#3a5a8a"/><rect x="4" y="9" width="3" height="3" fill="#3a5a8a"/><rect x="9" y="9" width="3" height="7" fill="#3a70b8"/></svg>
<div class="t" style="left:410px;top:727px">Launch Internet Explorer...</div>
<svg class="i" style="left:552px;top:725px" width="15" height="15" viewBox="0 0 15 15"><circle cx="7.500" cy="7.500" r="7" fill="#3a5aa8"/><path d="M7.500.5a7 7 0 11-7 7c1 0 1-3 3-4 1 2 4 0 4-3z" fill="#e8701a"/><path d="M11 3c2 3 1 7-3 8-3 0-4-2-4-2 3 1 5 0 6-2z" fill="#f8c030"/></svg>
<div class="t" style="left:570px;top:727px">Mozilla Firefox</div>
<svg class="i" style="left:711px;top:725px" width="15" height="15" viewBox="0 0 15 15"><circle cx="7.500" cy="7.500" r="7" fill="#d01818"/><ellipse cx="7.500" cy="7.500" rx="2.300" ry="5" fill="#fff"/></svg>
<div class="t" style="left:730px;top:727px">Opera</div>

<div class="tb" style="left:68px;width:114px"></div>
<svg class="i" style="left:73px;top:748px" width="15" height="15" viewBox="0 0 15 15"><circle cx="7.500" cy="7.500" r="7" fill="#3a5aa8"/><path d="M7.500.5a7 7 0 11-7 7c1 0 1-3 3-4 1 2 4 0 4-3z" fill="#e8701a"/><path d="M11 3c2 3 1 7-3 8-3 0-4-2-4-2 3 1 5 0 6-2z" fill="#f8c030"/></svg>
<div class="t" style="left:91px;top:749px"><b>3</b> Firefox</div>
<div class="ar" style="left:172px;top:755px"></div>

<div class="tb" style="left:185px;width:114px"></div>
<svg class="i" style="left:189px;top:747px" width="16" height="16" viewBox="0 0 16 16"><circle cx="8" cy="8" r="7" fill="#eef2f8" stroke="#404040" stroke-width="1.500"/><path d="M8 4v4l3 1" fill="none" stroke="#555"/></svg>
<div class="t" style="left:209px;top:749px">Tracker</div>

<div class="tb" style="left:302px;width:114px"></div>
<svg class="i" style="left:306px;top:748px" width="16" height="14" viewBox="0 0 16 14"><path d="M1 3h4l1-2h5v2h4v10H1z" fill="#f8e090" stroke="#a8801c"/><path d="M1 5h14" stroke="#a8801c"/></svg>
<div class="t" style="left:325px;top:749px"><b>3</b> Windows E...</div>
<div class="ar" style="left:406px;top:755px"></div>

<div class="tb" style="left:419px;width:114px"></div>
<svg class="i" style="left:423px;top:749px" width="16" height="12" viewBox="0 0 16 12"><path d="M1 6l4-4 3 4-3 4z" fill="#5a8ac8"/><path d="M5 2l3 4 4-5 3 4-5 5H5l3-4" fill="#f8a020"/><path d="M8 6l3-4 2 2-3 5z" fill="#e84030"/></svg>
<div class="t" style="left:442px;top:749px">cart.liquid - Mic...</div>

<div class="tb" style="left:537px;width:114px"></div>
<svg class="i" style="left:541px;top:747px" width="15" height="16" viewBox="0 0 15 16"><path d="M2 1h10l1 13-10 1z" fill="#7ab0e0" stroke="#4a80b8"/><path d="M5 5h6M5 8h6M5 11h6" stroke="#c8e0f4"/></svg>
<div class="t" style="left:560px;top:749px"><b>2</b> Notepad</div>
<div class="ar" style="left:641px;top:755px"></div>

<div class="tb" style="left:655px;width:114px"></div>
<svg class="i" style="left:660px;top:747px" width="15" height="16" viewBox="0 0 15 16"><path d="M1 1h10l3 2v12H1z" fill="#e8c088" stroke="#a88050"/><text x="2" y="12" font-family="Liberation Sans" font-size="11" font-weight="bold" fill="#1a5ab0">W</text></svg>
<div class="t" style="left:679px;top:749px">WordWeb</div>

<div class="a" style="left:772px;top:744px;width:115px;height:24px;box-sizing:border-box;border:1px solid;border-color:#404040 #fff #fff #404040;background:repeating-conic-gradient(#e8e5e0 0 25%,#fff 0 50%) 0 0/2px 2px"></div>
<svg class="i" style="left:780px;top:750px" width="14" height="14" viewBox="0 0 14 14"><circle cx="7" cy="7" r="6.500" fill="#2c2255" stroke="#d98a2c" stroke-dasharray="2 1"/><path d="M1 5h12M1 7.500h12M2 10h10" stroke="#fff" stroke-width="1.200"/></svg>
<div class="t" style="left:798px;top:750px;font-weight:bold;color:#000;letter-spacing:.1px">Java - FirstPr...</div>

<!-- tray -->
<div class="a" style="left:895px;top:722px;width:126px;height:46px;box-sizing:border-box;border:1px solid;border-color:#808080 #fff #fff #808080"></div>
<svg class="i" style="left:898px;top:726px" width="15" height="16" viewBox="0 0 15 16"><rect x="5" y="1" width="9" height="8" fill="#5a6aa8"/><rect x="1" y="6" width="9" height="8" fill="#8ab0d8" stroke="#4a5a88"/></svg>
<svg class="i" style="left:916px;top:729px" width="16" height="12" viewBox="0 0 16 12"><path d="M1 6l4-4 3 4-3 4z" fill="#5a8ac8"/><path d="M5 2l3 4 4-5 3 4-5 5H5l3-4" fill="#f8a020"/><path d="M8 6l3-4 2 2-3 5z" fill="#e84030"/></svg>
<svg class="i" style="left:934px;top:726px" width="16" height="16" viewBox="0 0 16 16"><circle cx="8" cy="8" r="7" fill="#eef2f8" stroke="#404040" stroke-width="1.500"/><path d="M8 4v4l3 1" fill="none" stroke="#555"/></svg>
<svg class="i" style="left:898px;top:745px" width="16" height="16" viewBox="0 0 16 16"><rect width="16" height="16" fill="#1a1aa8"/><circle cx="3" cy="3" r="3" fill="#f8f020"/><path d="M12 2L7 7 4 14M7 7l5 2 1 5" fill="none" stroke="#e01818" stroke-width="2.500"/><path d="M0 15h16" stroke="#e01818" stroke-width="2"/></svg>
<svg class="i" style="left:917px;top:745px" width="15" height="16" viewBox="0 0 15 16"><path d="M1 1h10l3 2v12H1z" fill="#e8c088" stroke="#a88050"/><text x="2" y="12" font-family="Liberation Sans" font-size="11" font-weight="bold" fill="#1a5ab0">W</text></svg>
<div class="t" style="left:966px;top:729px">5:01 PM</div>
<div class="t" style="left:962px;top:748px">Saturday</div>
</body></html>
